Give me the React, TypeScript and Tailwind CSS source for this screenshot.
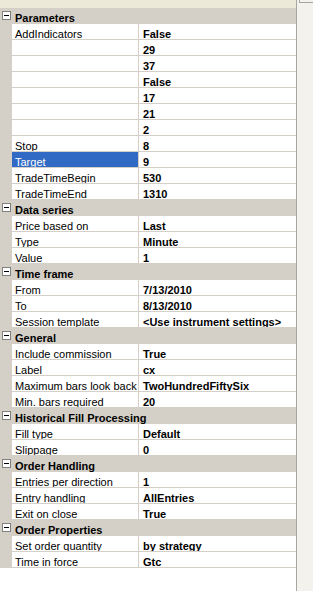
import React from "react";

type Row = { name: string; value: string; selected?: boolean };
type Section = { title: string; rows: Row[] };

const sections: Section[] = [
  {
    title: "Parameters",
    rows: [
      { name: "AddIndicators", value: "False" },
      { name: "", value: "29" },
      { name: "", value: "37" },
      { name: "", value: "False" },
      { name: "", value: "17" },
      { name: "", value: "21" },
      { name: "", value: "2" },
      { name: "Stop", value: "8" },
      { name: "Target", value: "9", selected: true },
      { name: "TradeTimeBegin", value: "530" },
      { name: "TradeTimeEnd", value: "1310" },
    ],
  },
  {
    title: "Data series",
    rows: [
      { name: "Price based on", value: "Last" },
      { name: "Type", value: "Minute" },
      { name: "Value", value: "1" },
    ],
  },
  {
    title: "Time frame",
    rows: [
      { name: "From", value: "7/13/2010" },
      { name: "To", value: "8/13/2010" },
      { name: "Session template", value: "<Use instrument settings>" },
    ],
  },
  {
    title: "General",
    rows: [
      { name: "Include commission", value: "True" },
      { name: "Label", value: "cx" },
      { name: "Maximum bars look back", value: "TwoHundredFiftySix" },
      { name: "Min. bars required", value: "20" },
    ],
  },
  {
    title: "Historical Fill Processing",
    rows: [
      { name: "Fill type", value: "Default" },
      { name: "Slippage", value: "0" },
    ],
  },
  {
    title: "Order Handling",
    rows: [
      { name: "Entries per direction", value: "1" },
      { name: "Entry handling", value: "AllEntries" },
      { name: "Exit on close", value: "True" },
    ],
  },
  {
    title: "Order Properties",
    rows: [
      { name: "Set order quantity", value: "by strategy" },
      { name: "Time in force", value: "Gtc" },
    ],
  },
];

function CollapseBox() {
  return (
    <span className="mt-[3px] ml-[2px] flex h-[9px] w-[9px] shrink-0 items-center justify-center border border-[#808080] bg-white">
      <span className="h-px w-[5px] bg-black" />
    </span>
  );
}

function SectionHeader({ title }: { title: string }) {
  return (
    <div className="flex h-4 bg-[#d4d0c8]">
      <CollapseBox />
      <span className="pt-[4.5px] pl-[4px] font-bold whitespace-nowrap text-black">
        {title}
      </span>
    </div>
  );
}

function PropertyRow({ row }: { row: Row }) {
  return (
    <div className="flex h-4">
      <div className="w-[12px] shrink-0 bg-[#d4d0c8]" />
      <div
        className={`w-[127px] shrink-0 overflow-hidden border-r border-b border-[#d4d0c8] pt-[4.5px] pl-[3px] whitespace-nowrap ${
          row.selected ? "bg-[#316ac5] text-white" : "bg-white text-black"
        }`}
      >
        {row.name}
      </div>
      <div className="min-w-0 flex-1 overflow-hidden border-b border-[#d4d0c8] bg-white pt-[4.5px] pl-[4px] font-bold whitespace-nowrap text-black">
        {row.value}
      </div>
    </div>
  );
}

export default function App() {
  return (
    <div
      className="flex h-[591px] w-[313px] overflow-hidden text-[11px] leading-[11px]"
      style={{ fontFamily: '"Liberation Sans", Arial, sans-serif' }}
    >
      <div className="flex w-[297px] shrink-0 flex-col border-r border-[#a7a6a0] bg-white">
        <div className="h-[8px] shrink-0 bg-[#ece9d8]" />
        {sections.map((section) => (
          <div key={section.title}>
            <SectionHeader title={section.title} />
            {section.rows.map((row, i) => (
              <PropertyRow key={section.title + i} row={row} />
            ))}
          </div>
        ))}
        <div className="flex-1 bg-white" />
      </div>
      <div className="flex flex-1 flex-col bg-[#f4f2ec]">
        <div className="ml-[2px] h-[3px] border-b border-l border-[#a7a6a0]" />
      </div>
    </div>
  );
}
